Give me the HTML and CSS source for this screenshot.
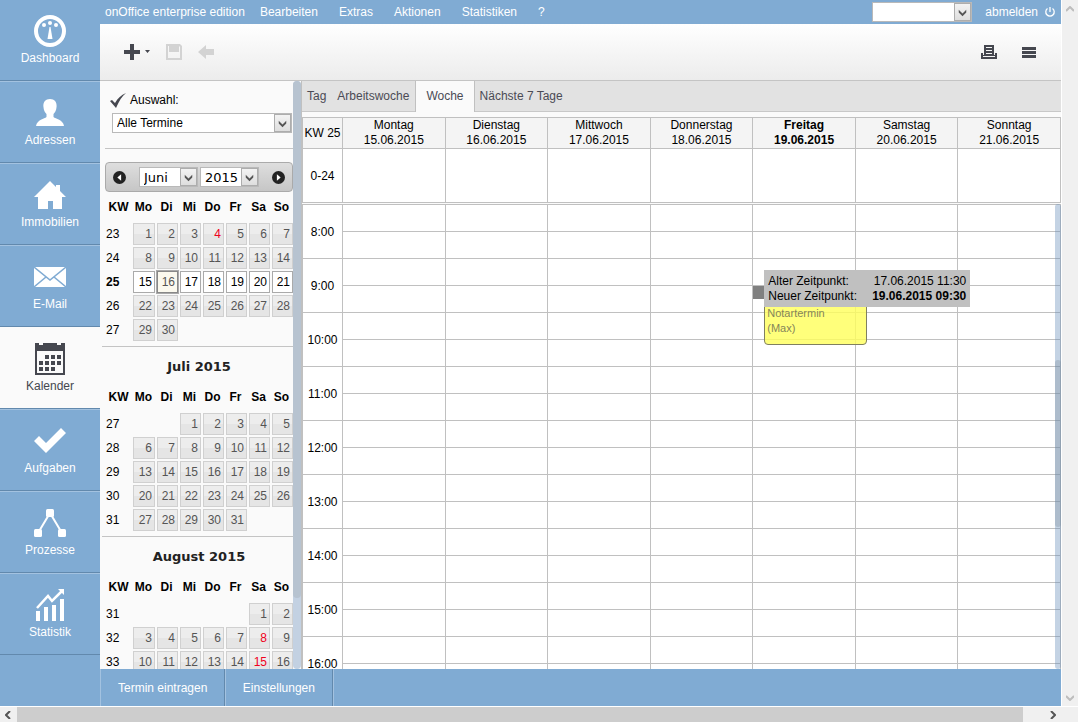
FILE: index.html
```html
<!DOCTYPE html>
<html lang="de">
<head>
<meta charset="utf-8">
<title>onOffice enterprise edition – Kalender</title>
<link rel="stylesheet" href="styles.css">
</head>
<body>
<div class="view">
  <div class="app">
    <nav class="modules">
      <a class="module" href="#"><svg width="32" height="32" viewBox="0 0 32 32"><circle cx="16" cy="16" r="14" fill="none" stroke="#fff" stroke-width="4"/><circle cx="10" cy="10" r="2"/><circle cx="16" cy="8" r="2"/><circle cx="22" cy="10" r="2"/><path d="M15.500 12h1l2 12h-5z"/></svg>Dashboard</a>
      <a class="module" href="#"><svg width="32" height="32" viewBox="0 0 32 32"><path d="M16 2c4.500 0 7 3 6.600 7.500-.3 4-1.600 6-3.100 7.500v3c2 2 9.500 2.500 10.500 9H2c1-6.500 8.500-7 10.500-9v-3c-1.500-1.500-2.800-3.500-3.100-7.500C9 5 11.500 2 16 2z"/></svg>Adressen</a>
      <a class="module" href="#"><svg width="32" height="32" viewBox="0 0 32 32"><path d="M16 2l6 6V6h4v6l6 6h-4v12h-9v-8h-5v8H4V18H0z"/></svg>Immobilien</a>
      <a class="module" href="#"><svg width="32" height="32" viewBox="0 0 32 32"><path d="M0 6h32v20H0z"/><path d="M0 6l16 13L32 6M0 26l12-10M32 26L20 16" fill="none" stroke="#80abd3" stroke-width="1.600"/></svg>E-Mail</a>
      <a class="module module-active" href="#"><svg width="32" height="32" viewBox="0 0 32 32"><path d="M1 0h4v2h4V0h14v2h4V0h4v32H1zM3 8v22h26V8z" fill-rule="evenodd"/><path d="M11 12h4v4h-4zM17 12h4v4h-4zM23 12h4v4h-4zM5 18h4v4H5zM11 18h4v4h-4zM17 18h4v4h-4zM23 18h4v4h-4zM5 24h4v4H5zM11 24h4v4h-4zM17 24h4v4h-4z"/></svg>Kalender</a>
      <a class="module" href="#"><svg width="32" height="32" viewBox="0 0 32 32"><path d="M0 16l5-5 7 7L27 3l5 5-20 20z"/></svg>Aufgaben</a>
      <a class="module" href="#"><svg width="32" height="32" viewBox="0 0 32 32"><path d="M4 26L16 6l12 20" fill="none" stroke="#fff" stroke-width="2"/><rect x="12" y="2" width="8" height="8" rx="1.500"/><rect y="22" width="8" height="8" rx="1.500"/><rect x="24" y="22" width="8" height="8" rx="1.500"/></svg>Prozesse</a>
      <a class="module" href="#"><svg width="32" height="32" viewBox="0 0 32 32"><path d="M2 22h4v10H2zM10 18h4v14h-4zM18 16h4v16h-4zM26 10h4v22h-4z"/><path d="M3 19L14 7l4 5L28 2" fill="none" stroke="#fff" stroke-width="2.500"/><path d="M24 0h6v6z"/></svg>Statistik</a>
    </nav>
    <div class="main">
      <header class="menubar">
        <a href="#">onOffice enterprise edition</a>
        <a href="#">Bearbeiten</a>
        <a href="#">Extras</a>
        <a href="#">Aktionen</a>
        <a href="#">Statistiken</a>
        <a href="#">?</a>
        <span class="pick pick-top"><select aria-label="Schnellzugriff"><option></option></select><svg class="chevron" width="16" height="17" viewBox="0 0 16 17"><path d="M4 6l4 4 4-4v3l-4 4-4-4z"/></svg></span>
        <a class="logout" href="#">abmelden<svg width="12" height="12" viewBox="0 0 12 12"><path d="M3.500 2.500a4.200 4.200 0 1 0 5 0M6 1v5" fill="none" stroke="#fff" stroke-width="1.300"/></svg></a>
      </header>
      <div class="toolbar">
        <button class="tool" aria-label="Neu"><svg width="26" height="16" viewBox="0 0 26 16"><path d="M6 0h4v6h6v4h-6v6H6v-6H0V6h6zM21 6h5l-2.500 3z"/></svg></button>
        <button class="tool tool-off" aria-label="Speichern"><svg width="16" height="16" viewBox="0 0 16 16"><path d="M0 0h14l2 2v14H0zM2 2v12h12V3l-1-1v6H3V2z" fill-rule="evenodd"/><path d="M4 1h8v6H4zM8 2v3h2V2z" fill-rule="evenodd"/></svg></button>
        <button class="tool tool-off" aria-label="Zurück"><svg width="16" height="16" viewBox="0 0 16 16"><path d="M0 8l8-7v4h8v6H8v4z"/></svg></button>
        <button class="tool tool-print" aria-label="Drucken"><svg width="16" height="14" viewBox="0 0 16 14"><path d="M3 0h10v10h1V8h2v6H0V8h2v2h1zM5 2v1h6V2zM5 5v1h6V5zM5 8v1h6V8zM2 11v1h12v-1z" fill-rule="evenodd"/></svg></button>
        <button class="tool" aria-label="Menü"><svg width="14" height="11" viewBox="0 0 14 11"><path d="M0 0h14v3H0zM0 4h14v3H0zM0 8h14v3H0z"/></svg></button>
      </div>
      <div class="work">
        <aside class="side">
          <div class="side-body">
            <div class="filter">
              <label for="auswahl"><svg width="16" height="15" viewBox="0 0 16 15"><path d="M0 8l2-1 3 3C8 5 11 2 16 0c-4 3-7 8-10 15z"/></svg>Auswahl:</label>
              <span class="pick pick-wide"><select id="auswahl"><option>Alle Termine</option></select><svg class="chevron" width="16" height="17" viewBox="0 0 16 17"><path d="M4 6l4 4 4-4v3l-4 4-4-4z"/></svg></span>
            </div>
            <div class="monthbar">
              <button aria-label="Vorheriger Monat"><svg width="13" height="13" viewBox="0 0 12 12"><circle cx="6" cy="6" r="6" fill="#222"/><path d="M7.500 3v6L4 6z" fill="#fff"/></svg></button>
              <span class="pick pick-month"><select aria-label="Monat"><option>Juni</option></select><svg class="chevron" width="16" height="17" viewBox="0 0 16 17"><path d="M4 6l4 4 4-4v3l-4 4-4-4z"/></svg></span>
              <span class="pick pick-month"><select aria-label="Jahr"><option>2015</option></select><svg class="chevron" width="16" height="17" viewBox="0 0 16 17"><path d="M4 6l4 4 4-4v3l-4 4-4-4z"/></svg></span>
              <button aria-label="Nächster Monat"><svg width="13" height="13" viewBox="0 0 12 12"><circle cx="6" cy="6" r="6" fill="#222"/><path d="M4.500 3v6L8 6z" fill="#fff"/></svg></button>
            </div>
            <table class="month">
              <thead><tr><th class="kw">KW</th><th>Mo</th><th>Di</th><th>Mi</th><th>Do</th><th>Fr</th><th>Sa</th><th>So</th></tr></thead>
              <tbody>
              <tr><th>23</th><td><a href="#">1</a></td><td><a href="#">2</a></td><td><a href="#">3</a></td><td><a class="holiday" href="#">4</a></td><td><a href="#">5</a></td><td><a href="#">6</a></td><td><a href="#">7</a></td></tr>
              <tr><th>24</th><td><a href="#">8</a></td><td><a href="#">9</a></td><td><a href="#">10</a></td><td><a href="#">11</a></td><td><a href="#">12</a></td><td><a href="#">13</a></td><td><a href="#">14</a></td></tr>
              <tr class="current"><th>25</th><td><a href="#">15</a></td><td><a class="today" href="#">16</a></td><td><a href="#">17</a></td><td><a href="#">18</a></td><td><a href="#">19</a></td><td><a href="#">20</a></td><td><a href="#">21</a></td></tr>
              <tr><th>26</th><td><a href="#">22</a></td><td><a href="#">23</a></td><td><a href="#">24</a></td><td><a href="#">25</a></td><td><a href="#">26</a></td><td><a href="#">27</a></td><td><a href="#">28</a></td></tr>
              <tr><th>27</th><td><a href="#">29</a></td><td><a href="#">30</a></td><td></td><td></td><td></td><td></td><td></td></tr>
              </tbody>
            </table>
            <h2>Juli 2015</h2>
            <table class="month">
              <thead><tr><th class="kw">KW</th><th>Mo</th><th>Di</th><th>Mi</th><th>Do</th><th>Fr</th><th>Sa</th><th>So</th></tr></thead>
              <tbody>
              <tr><th>27</th><td></td><td></td><td><a href="#">1</a></td><td><a href="#">2</a></td><td><a href="#">3</a></td><td><a href="#">4</a></td><td><a href="#">5</a></td></tr>
              <tr><th>28</th><td><a href="#">6</a></td><td><a href="#">7</a></td><td><a href="#">8</a></td><td><a href="#">9</a></td><td><a href="#">10</a></td><td><a href="#">11</a></td><td><a href="#">12</a></td></tr>
              <tr><th>29</th><td><a href="#">13</a></td><td><a href="#">14</a></td><td><a href="#">15</a></td><td><a href="#">16</a></td><td><a href="#">17</a></td><td><a href="#">18</a></td><td><a href="#">19</a></td></tr>
              <tr><th>30</th><td><a href="#">20</a></td><td><a href="#">21</a></td><td><a href="#">22</a></td><td><a href="#">23</a></td><td><a href="#">24</a></td><td><a href="#">25</a></td><td><a href="#">26</a></td></tr>
              <tr><th>31</th><td><a href="#">27</a></td><td><a href="#">28</a></td><td><a href="#">29</a></td><td><a href="#">30</a></td><td><a href="#">31</a></td><td></td><td></td></tr>
              </tbody>
            </table>
            <h2>August 2015</h2>
            <table class="month">
              <thead><tr><th class="kw">KW</th><th>Mo</th><th>Di</th><th>Mi</th><th>Do</th><th>Fr</th><th>Sa</th><th>So</th></tr></thead>
              <tbody>
              <tr><th>31</th><td></td><td></td><td></td><td></td><td></td><td><a href="#">1</a></td><td><a href="#">2</a></td></tr>
              <tr><th>32</th><td><a href="#">3</a></td><td><a href="#">4</a></td><td><a href="#">5</a></td><td><a href="#">6</a></td><td><a href="#">7</a></td><td><a class="holiday" href="#">8</a></td><td><a href="#">9</a></td></tr>
              <tr><th>33</th><td><a href="#">10</a></td><td><a href="#">11</a></td><td><a href="#">12</a></td><td><a href="#">13</a></td><td><a href="#">14</a></td><td><a class="holiday" href="#">15</a></td><td><a href="#">16</a></td></tr>
              </tbody>
            </table>
          </div>
          <div class="rail"><div class="rail-thumb"></div></div>
        </aside>
        <section class="content">
          <div class="tabs"><a href="#">Tag</a><a href="#">Arbeitswoche</a><a class="tab-active" href="#">Woche</a><a href="#">Nächste 7 Tage</a></div>
          <table class="week week-head">
            <tr class="days"><th class="time">KW 25</th><th>Montag<br>15.06.2015</th><th>Dienstag<br>16.06.2015</th><th>Mittwoch<br>17.06.2015</th><th>Donnerstag<br>18.06.2015</th><th class="picked">Freitag<br>19.06.2015</th><th>Samstag<br>20.06.2015</th><th>Sonntag<br>21.06.2015</th></tr>
            <tr class="allday"><th class="time">0-24</th><td></td><td></td><td></td><td></td><td></td><td></td><td></td></tr>
          </table>
          <div class="hours">
            <table class="week">
              <tr><th class="time" rowspan="2">8:00</th><td></td><td></td><td></td><td></td><td></td><td></td><td></td></tr>
              <tr><td></td><td></td><td></td><td></td><td></td><td></td><td></td></tr>
              <tr><th class="time" rowspan="2">9:00</th><td></td><td></td><td></td><td></td><td></td><td></td><td></td></tr>
              <tr><td></td><td></td><td></td><td></td><td class="slot">
                <div class="marker"></div>
                <div class="event">Notartermin<br>(Max)</div>
                <dl class="tip"><dt>Alter Zeitpunkt:</dt><dd>17.06.2015 11:30</dd><dt>Neuer Zeitpunkt:</dt><dd><b>19.06.2015 09:30</b></dd></dl>
              </td><td></td><td></td></tr>
              <tr><th class="time" rowspan="2">10:00</th><td></td><td></td><td></td><td></td><td></td><td></td><td></td></tr>
              <tr><td></td><td></td><td></td><td></td><td></td><td></td><td></td></tr>
              <tr><th class="time" rowspan="2">11:00</th><td></td><td></td><td></td><td></td><td></td><td></td><td></td></tr>
              <tr><td></td><td></td><td></td><td></td><td></td><td></td><td></td></tr>
              <tr><th class="time" rowspan="2">12:00</th><td></td><td></td><td></td><td></td><td></td><td></td><td></td></tr>
              <tr><td></td><td></td><td></td><td></td><td></td><td></td><td></td></tr>
              <tr><th class="time" rowspan="2">13:00</th><td></td><td></td><td></td><td></td><td></td><td></td><td></td></tr>
              <tr><td></td><td></td><td></td><td></td><td></td><td></td><td></td></tr>
              <tr><th class="time" rowspan="2">14:00</th><td></td><td></td><td></td><td></td><td></td><td></td><td></td></tr>
              <tr><td></td><td></td><td></td><td></td><td></td><td></td><td></td></tr>
              <tr><th class="time" rowspan="2">15:00</th><td></td><td></td><td></td><td></td><td></td><td></td><td></td></tr>
              <tr><td></td><td></td><td></td><td></td><td></td><td></td><td></td></tr>
              <tr><th class="time" rowspan="2">16:00</th><td></td><td></td><td></td><td></td><td></td><td></td><td></td></tr>
              <tr><td></td><td></td><td></td><td></td><td></td><td></td><td></td></tr>
            </table>
            <div class="hours-rail"><div class="hours-thumb"></div></div>
          </div>
        </section>
      </div>
      <footer class="actions"><button>Termin eintragen</button><button>Einstellungen</button></footer>
    </div>
  </div>
  <div class="vscroll">
    <svg width="8" height="6" viewBox="0 0 8 6"><path d="M0 5l4-4 4 4" /></svg>
    <svg width="8" height="6" viewBox="0 0 8 6"><path d="M0 1l4 4 4-4" /></svg>
  </div>
</div>
<div class="hscroll">
  <svg width="6" height="8" viewBox="0 0 6 8"><path d="M5 0L1 4l4 4"/></svg>
  <div class="hthumb"></div>
  <svg width="6" height="8" viewBox="0 0 6 8"><path d="M1 0l4 4-4 4"/></svg>
</div>
</body>
</html>
```

FILE: styles.css
```css
* { box-sizing: border-box; }
body {
  margin: 0;
  height: 100vh;
  display: flex;
  flex-direction: column;
  overflow: hidden;
  font: 12px/15px "Liberation Sans", Arial, sans-serif;
  color: #000;
  background: #fff;
}
a { color: inherit; text-decoration: none; }
button, select { font: inherit; color: inherit; margin: 0; padding: 0; border: 0; background: none; }
svg { display: block; fill: currentColor; flex: none; }
table { border-spacing: 0; table-layout: fixed; width: 100%; }
th, td { padding: 0; font-weight: normal; }

.view { flex: 1; min-height: 0; display: flex; }
.app { flex: 1; min-width: 0; display: flex; background: #80abd3; }

/* module navigation */
.modules { width: 100px; flex: none; overflow: hidden; color: #fff; }
.module {
  height: 82px;
  display: flex;
  flex-direction: column;
  align-items: center;
  gap: 4px;
  padding-top: 15px;
  border-top: 1px solid #a3c2e0;
  border-bottom: 1px solid #6289ad;
}
.module:first-child { height: 81px; border-top: 0; }
.module-active { background: #fafafa; color: #45474f; border-top-color: #fafafa; }

.main { flex: 1; min-width: 0; display: flex; flex-direction: column; }

/* menu bar */
.menubar { height: 24px; flex: none; display: flex; align-items: center; gap: 21px; padding: 0 5px; color: #fff; }
.menubar a:first-child { margin-right: -6px; }
.logout { display: flex; align-items: center; gap: 6px; margin-left: -8px; }

/* drop-downs */
.pick { position: relative; display: block; border: 1px solid #b9b9b9; background: #fff; color: #000; }
.pick select { appearance: none; display: block; width: 100%; height: 18px; padding: 0 20px 0 4px; outline: 0; }
.chevron {
  position: absolute;
  top: 0;
  right: 0;
  height: 18px;
  width: 17px;
  border: 1px solid #adadad;
  background: linear-gradient(#f3f3f3, #dedede);
  color: #555;
  pointer-events: none;
}
.pick-top { width: 100px; margin-left: auto; }
.pick-month { width: 59px; font-family: "DejaVu Sans", Verdana, sans-serif; font-size: 13px; }
.pick-month + .pick-month { margin-left: 2px; margin-right: auto; }
.pick-month select { padding-right: 17px; }

/* toolbar */
.toolbar {
  height: 57px;
  flex: none;
  display: flex;
  align-items: center;
  gap: 16px;
  padding: 0 25px 0 24px;
  color: #45474f;
  background: linear-gradient(#fff, #ececec);
  border-bottom: 1px solid #c4c4c4;
}
.tool-off { color: #d3d3d3; }
.tool-print { margin-left: auto; margin-right: 9px; }

.work { flex: 1; min-height: 0; display: flex; background: #fafafa; }

/* side calendar */
.side { width: 201px; flex: none; display: flex; overflow: hidden; }
.side-body { width: 193px; flex: none; }
.filter { margin-left: 5px; padding: 12px 0 15px; border-bottom: 1px solid #c4c4c4; }
.filter label { display: flex; align-items: center; gap: 4px; padding-left: 5px; }
.filter label svg { color: #45474f; }
.filter .pick { margin: 5px 1px 0 7px; }
.monthbar {
  display: flex;
  align-items: center;
  height: 30px;
  margin: 13px 0 5px 5px;
  padding: 0 7px;
  border: 1px solid #aaa;
  border-radius: 4px;
  background: linear-gradient(#dedede, #c6c6c6);
}
.monthbar button + .pick { margin-left: 13px; }
.month { width: 188px; margin: 0 0 4px 5px; }
.month thead th { height: 25px; line-height: 20px; vertical-align: top; font-weight: bold; text-align: center; }
.month thead .kw { width: 27px; }
.month tbody th { height: 24px; padding-left: 1px; text-align: left; }
.month tbody td { padding: 1px 0 1px 1px; }
.month td a {
  display: block;
  height: 22px;
  padding-right: 2px;
  line-height: 20px;
  text-align: right;
  color: #555;
  border: 1px solid #d0d0d0;
  background: linear-gradient(#ededed 50%, #e5e5e5 50%);
}
.month tbody td + td { padding-left: 2px; }
.month .current th { font-weight: bold; }
.month .current a { color: #000; background: #fff; border-color: #aaa; }
.month .current .today { color: #555; background: #fbf9ee; border-color: #888; outline: 1px solid #aaa; }
.month td .holiday { color: #f00020; }
.side h2 {
  margin: 0 0 0 2px;
  padding-left: 3px;
  border-top: 1px solid #c4c4c4;
  font: bold 13px/40px "DejaVu Sans", Verdana, sans-serif;
  text-align: center;
  color: #222;
}
.rail { flex: 1; background: #c3d1e2; border-radius: 4px; }
.rail-thumb { height: 88%; background: #b7c3d0; border-radius: 4px; }

/* week view */
.content { flex: 1; min-width: 0; display: flex; flex-direction: column; border-left: 1px solid #c0c0c0; }
.tabs {
  display: flex;
  flex: none;
  height: 31px;
  margin-bottom: 5px;
  line-height: 30px;
  color: #4b4b55;
  background: #e2e2e2;
  border-bottom: 1px solid #c8c8c8;
}
.tabs a { padding: 0 6px 0 5px; }
.tabs .tab-active { height: 31px; padding: 0 10px; background: #fafafa; border: solid #c0c0c0; border-width: 0 1px; }
.week { border: solid #c0c0c0; border-width: 1px 0 0 1px; background: #fff; }
.week-head { flex: none; margin-bottom: 1px; }
.week th, .week td { height: 27px; text-align: center; border: solid #c0c0c0; border-width: 0 1px 1px 0; }
.week .time { width: 40px; padding-top: 1px; }
.week .days th { height: 31px; background: #f4f4f4; }
.week .allday td { height: 54px; }
.week .picked { font-weight: bold; }
.hours { position: relative; flex: 1; min-height: 0; overflow: hidden; }
.hours-rail { position: absolute; top: 0; right: 0; bottom: 0; width: 6px; border-radius: 3px; background: rgba(100, 140, 185, .38); }
.hours-thumb { height: 36%; margin-top: 156px; border-radius: 3px; background: rgba(120, 135, 150, .3); }

/* dragged appointment */
.week .slot { position: relative; }
.marker { position: absolute; top: 0; left: 0; width: 12px; height: 13px; background: #808080; }
.event {
  position: absolute;
  top: 4px;
  left: 11px;
  width: 100%;
  min-width: 103px;
  padding: 15px 2px 8px;
  font-size: 11px;
  text-align: left;
  color: #85855a;
  border: 1px solid #808060;
  border-radius: 4px;
  background: rgba(255, 255, 90, .8);
}
.tip {
  position: absolute;
  z-index: 1;
  top: -16px;
  left: 11px;
  width: 206px;
  margin: 0;
  padding: 4px 4px 3px;
  display: grid;
  grid-template-columns: auto auto;
  justify-content: space-between;
  text-align: left;
  background: #c0c0c0;
  white-space: nowrap;
}
.tip dd { margin: 0; text-align: right; }

/* bottom actions */
.actions { height: 37px; flex: none; display: flex; color: #fff; border-left: 1px solid #a3c2e0; }
.actions button { min-width: 108px; padding: 2px 17px 0; border-right: 1px solid #6289ad; box-shadow: 1px 0 #a3c2e0; }

/* window scrollbars */
.vscroll {
  width: 17px;
  flex: none;
  display: flex;
  flex-direction: column;
  align-items: center;
  justify-content: space-between;
  padding: 6px 0 5px;
  border-left: 1px solid #fff;
  background: #f0f0f0;
}
.vscroll path { fill: none; stroke: #bdbdbd; stroke-width: 2; }
.hscroll {
  height: 16px;
  flex: none;
  display: flex;
  align-items: center;
  padding: 0 22px 0 5px;
  border-top: 1px solid #fff;
  background: #f0f0f0;
}
.hscroll path { fill: none; stroke: #555; stroke-width: 2; }
.hthumb { flex: 1; height: 15px; margin: 0 27px 0 6px; background: #cdcdcd; }
```
